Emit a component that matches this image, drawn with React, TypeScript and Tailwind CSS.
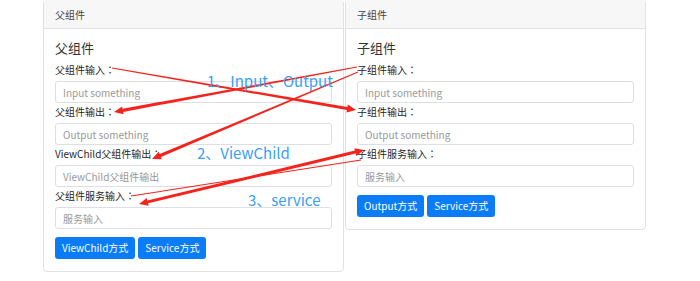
import React from 'react';

type Pt = [number, number];

// tapered arrow polygon: thin at start, thick near head
function arrowPoints(from: Pt, to: Pt, w1: number, w2: number, headLen: number, headW: number, both = false) {
  const [x1, y1] = from;
  const [x2, y2] = to;
  const len = Math.hypot(x2 - x1, y2 - y1);
  const ux = (x2 - x1) / len;
  const uy = (y2 - y1) / len;
  const nx = -uy;
  const ny = ux;
  const p = (x: number, y: number) => `${x.toFixed(1)},${y.toFixed(1)}`;
  const bx = x2 - ux * headLen;
  const by = y2 - uy * headLen;
  const sx = both ? x1 + ux * headLen : x1;
  const sy = both ? y1 + uy * headLen : y1;
  const pts: string[] = [];
  if (both) {
    pts.push(p(x1, y1));
    pts.push(p(sx + nx * headW, sy + ny * headW));
  }
  pts.push(p(sx + (nx * w1) / 2, sy + (ny * w1) / 2));
  pts.push(p(bx + (nx * w2) / 2, by + (ny * w2) / 2));
  if (headLen > 0) {
    pts.push(p(bx + nx * headW, by + ny * headW));
    pts.push(p(x2, y2));
    pts.push(p(bx - nx * headW, by - ny * headW));
  }
  pts.push(p(bx - (nx * w2) / 2, by - (ny * w2) / 2));
  pts.push(p(sx - (nx * w1) / 2, sy - (ny * w1) / 2));
  if (both) pts.push(p(sx - nx * headW, sy - ny * headW));
  return pts.join(' ');
}

const arrows = [
  arrowPoints([112, 68], [356, 110], 0.8, 3.2, 9, 4),
  arrowPoints([357, 67], [114, 112], 0.8, 3.4, 9, 4),
  arrowPoints([358, 72], [152, 159], 0.8, 3.2, 9, 4),
  arrowPoints([131, 196], [361, 160], 1.1, 1.1, 0, 0),
  arrowPoints([139, 204], [364, 150], 2.6, 3, 9, 4, true),
];

const Field = ({ label, placeholder }: { label: string; placeholder: string }) => (
  <>
    <div className="text-[10px] leading-[18px] mb-[2px] text-[#262626]">
      {label}
      <span style={{ fontFamily: '"Noto Sans CJK TC", sans-serif' }}>：</span>
    </div>
    <input
      readOnly
      placeholder={placeholder}
      className="block w-full h-[22px] border border-[#dcdfe3] rounded-[3px] px-[7px] text-[10px] outline-none placeholder:text-[#999]"
    />
  </>
);

const Btn = ({ children }: { children: React.ReactNode }) => (
  <button className="h-[22px] px-[7px] rounded-[3px] bg-[#0a7cf8] text-white text-[10px] leading-none">{children}</button>
);

const Card = ({
  name,
  width,
  fields,
  buttons,
}: {
  name: string;
  width: string;
  fields: [string, string][];
  buttons: string[];
}) => (
  <div className={`${width} -mt-px border border-[#e2e2e2] rounded-[4px] bg-white`}>
    <div className="h-[29px] bg-[#f7f7f7] border-b border-[#e2e2e2] px-[11px] flex items-center text-[10px] text-[#444]">
      {name}
    </div>
    <div className="px-[11px] pt-[10px] pb-[12px]">
      <div className="text-[13px] leading-[18px] mb-[4px] text-[#333]">{name}</div>
      {fields.map(([l, p]) => (
        <Field key={l} label={l} placeholder={p} />
      ))}
      <div className="flex gap-[3px] mt-[8px]">
        {buttons.map((b) => (
          <Btn key={b}>{b}</Btn>
        ))}
      </div>
    </div>
  </div>
);

export default function App() {
  return (
    <div
      className="relative w-[700px] h-[281px] overflow-hidden bg-white"
      style={{ fontFamily: '"Noto Sans CJK SC", "Liberation Sans", sans-serif' }}
    >
      <div className="flex items-start pl-[43px] gap-px">
        <Card
          name="父组件"
          width="w-[301px]"
          fields={[
            ['父组件输入', 'Input something'],
            ['父组件输出', 'Output something'],
            ['ViewChild父组件输出', 'ViewChild父组件输出'],
            ['父组件服务输入', '服务输入'],
          ]}
          buttons={['ViewChild方式', 'Service方式']}
        />
        <Card
          name="子组件"
          width="w-[301px]"
          fields={[
            ['子组件输入', 'Input something'],
            ['子组件输出', 'Output something'],
            ['子组件服务输入', '服务输入'],
          ]}
          buttons={['Output方式', 'Service方式']}
        />
      </div>

      {/* annotations drawn over the page */}
      <svg className="absolute inset-0 pointer-events-none" width="700" height="281">
        {arrows.map((pts, i) => (
          <polygon key={i} points={pts} fill="#f5231b" />
        ))}
      </svg>
      <div className="absolute left-[207px] top-[71px] text-[15px] leading-[20px] text-[#3a9ff2]">1、Input、Output</div>
      <div className="absolute left-[197px] top-[143px] text-[15px] leading-[20px] text-[#3a9ff2]">2、ViewChild</div>
      <div className="absolute left-[248px] top-[190px] text-[15px] leading-[20px] text-[#3a9ff2]">3、service</div>
    </div>
  );
}
